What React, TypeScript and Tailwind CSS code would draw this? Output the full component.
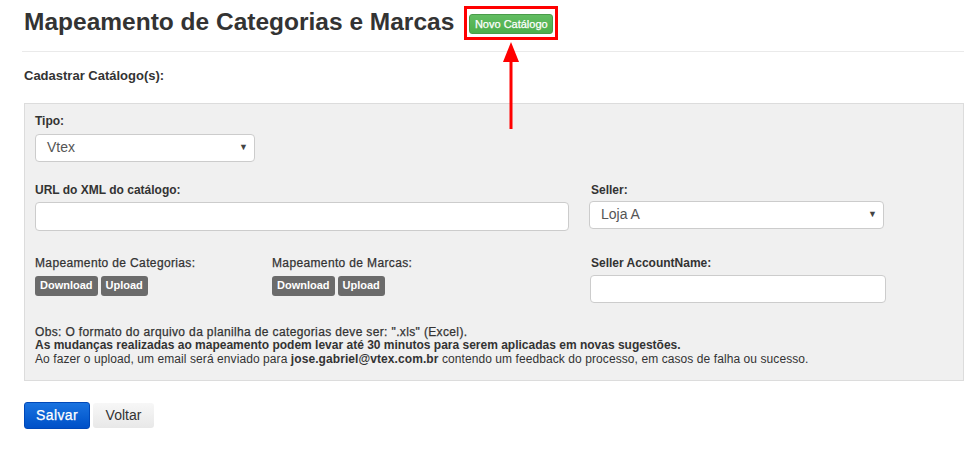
function SmallBtn({ label }: { label: string }) {
  return (
    <button className="h-[20px] px-[5px] rounded-[3px] bg-[#6b6b6b] text-white text-[11px] font-bold leading-none">
      {label}
    </button>
  );
}

function Select({ value, w }: { value: string; w: string }) {
  return (
    <div
      className={`${w} h-[28px] bg-white border border-[#ccc] rounded-[4px] flex items-center justify-between pl-[11px] pr-[6px] text-[14px] text-[#555]`}
    >
      <span>{value}</span>
      <span className="text-[9px] text-[#444]">▼</span>
    </div>
  );
}

// medium weight used for some labels in the original
const medium = "tracking-[0.36px] [-webkit-text-stroke:0.25px_currentColor]";

export default function App() {
  return (
    <div
      className="relative w-[975px] h-[468px] bg-white text-[#333] overflow-hidden"
      style={{ fontFamily: '"Liberation Sans", Arial, sans-serif' }}
    >
      <div className="pl-[24px] pr-[11px]">
        {/* header */}
        <div className="flex items-center h-[44px] pt-[1px]">
          <h1 className="text-[24.5px] font-bold leading-none text-[#333]">
            Mapeamento de Categorias e Marcas
          </h1>
          <div className="ml-[10px] border-[3px] border-[#ff0000] p-[2px]">
            <button className="h-[20px] w-[84px] rounded-[3px] bg-gradient-to-b from-[#62bd62] to-[#4cae4c] border border-[#4a9c4a] text-white text-[11px] leading-none [-webkit-text-stroke:0.25px_currentColor]">
              Novo Catálogo
            </button>
          </div>
        </div>
        <div className="h-[1px] bg-[#eaeaea] mt-[7px] -ml-[2px]" />

        <div className="mt-[14px] text-[13px] font-bold">Cadastrar Catálogo(s):</div>

        {/* panel */}
        <div className="mt-[17px] bg-[#f0f0f0] border border-[#dcdcdc] pl-[10px] pt-[10px] h-[278px]">
          <div className="text-[12px] font-bold leading-[14px]">Tipo:</div>
          <div className="mt-[6px]">
            <Select value="Vtex" w="w-[220px]" />
          </div>

          <div className="flex mt-[21px]">
            <div className="w-[554px]">
              <div className="text-[12px] font-bold leading-[14px]">URL do XML do catálogo:</div>
              <div className="mt-[5px] w-[534px] h-[29px] bg-white border border-[#ccc] rounded-[4px]" />
            </div>
            <div>
              <div className="text-[12px] font-bold leading-[14px] pl-[2px]">Seller:</div>
              <div className="mt-[4px]">
                <Select value="Loja A" w="w-[295px]" />
              </div>
            </div>
          </div>

          <div className="flex mt-[25px]">
            <div className="w-[237px]">
              <div className={`text-[12px] leading-[14px] ${medium}`}>Mapeamento de Categorias:</div>
              <div className="mt-[6px] flex gap-[3px]">
                <SmallBtn label="Download" />
                <SmallBtn label="Upload" />
              </div>
            </div>
            <div className="w-[318px]">
              <div className={`text-[12px] leading-[14px] ${medium}`}>Mapeamento de Marcas:</div>
              <div className="mt-[6px] flex gap-[3px]">
                <SmallBtn label="Download" />
                <SmallBtn label="Upload" />
              </div>
            </div>
            <div>
              <div className="text-[12px] font-bold leading-[14px] pl-[1px]">Seller AccountName:</div>
              <div className="mt-[5px] w-[296px] h-[28px] bg-white border border-[#ccc] rounded-[4px]" />
            </div>
          </div>

          <div className="mt-[23px] text-[12px] leading-[13.5px]">
            <div className={medium}>Obs: O formato do arquivo da planilha de categorias deve ser: ".xls" (Excel).</div>
            <div className="font-bold">
              As mudanças realizadas ao mapeamento podem levar até 30 minutos para serem aplicadas em novas sugestões.
            </div>
            <div className="tracking-[0.08px]">
              Ao fazer o upload, um email será enviado para <b>jose.gabriel@vtex.com.br</b> contendo um feedback do
              processo, em casos de falha ou sucesso.
            </div>
          </div>
        </div>

        {/* actions */}
        <div className="mt-[21px] flex items-center gap-[3px]">
          <button
            className={`h-[27px] w-[66px] rounded-[3px] bg-gradient-to-b from-[#1a73e0] to-[#0050c8] border border-[#0048b8] text-white text-[14px] ${medium}`}
          >
            Salvar
          </button>
          <button className="h-[25px] w-[61px] rounded-[3px] bg-gradient-to-b from-[#f7f7f7] to-[#e8e8e8] text-[#333] text-[14px]">
            Voltar
          </button>
        </div>
      </div>

      {/* annotation arrow */}
      <svg className="absolute left-[501px] top-[42px]" width="20" height="88" viewBox="0 0 20 88">
        <polygon points="10,0 2,20 18,20" fill="#ff0000" />
        <rect x="8.5" y="18" width="3" height="69" fill="#ff0000" />
      </svg>
    </div>
  );
}
